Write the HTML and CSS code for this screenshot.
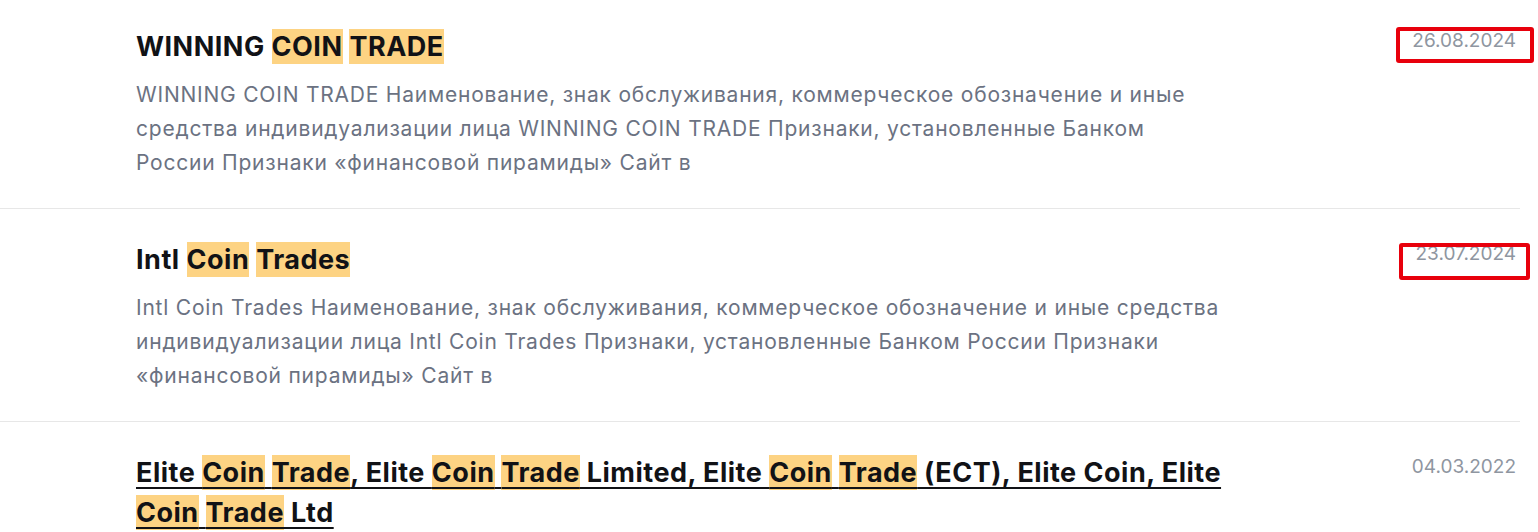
FILE: index.html
```html
<!DOCTYPE html>
<html lang="ru">
<head>
<meta charset="utf-8">
<title>Результаты поиска</title>
<link rel="stylesheet" href="styles.css">
</head>
<body>
<div class="results">
  <div class="row">
    <div class="content">
      <a class="title">WINNING <mark>COIN</mark> <mark>TRADE</mark></a>
      <p class="snippet">WINNING COIN TRADE Наименование, знак обслуживания, коммерческое обозначение и иные средства индивидуализации лица WINNING COIN TRADE Признаки, установленные Банком России Признаки «финансовой пирамиды» Сайт в</p>
    </div>
    <div class="date"><span class="frame frame-a"></span>26.08.2024</div>
  </div>
  <div class="row">
    <div class="content">
      <a class="title">Intl <mark>Coin</mark> <mark>Trades</mark></a>
      <p class="snippet">Intl Coin Trades Наименование, знак обслуживания, коммерческое обозначение и иные средства индивидуализации лица Intl Coin Trades Признаки, установленные Банком России Признаки «финансовой пирамиды» Сайт в</p>
    </div>
    <div class="date"><span class="frame frame-b"></span>23.07.2024</div>
  </div>
  <div class="row">
    <div class="content">
      <a class="title title-hover">Elite <mark>Coin</mark> <mark>Trade</mark>, Elite <mark>Coin</mark> <mark>Trade</mark> Limited, Elite <mark>Coin</mark> <mark>Trade</mark> (ECT), Elite Coin, Elite <mark>Coin</mark> <mark>Trade</mark> Ltd</a>
    </div>
    <div class="date">04.03.2022</div>
  </div>
</div>
</body>
</html>
```

FILE: styles.css
```css
html, body {
  margin: 0;
  padding: 0;
  background: #ffffff;
}

body {
  font-family: Inter, "Noto Sans", "Liberation Sans", sans-serif;
  overflow: hidden;
}

.results {
  width: 1520px;
  margin-top: -4px;
}

.row {
  display: flex;
  justify-content: space-between;
  align-items: flex-start;
  padding: 31px 4px 28px 136px;
  border-bottom: 1px solid #e7e7e7;
}

.content {
  width: 1090px;
}

.title {
  display: block;
  font-size: 27px;
  line-height: 40px;
  font-weight: 700;
  letter-spacing: 0.5px;
  color: #111216;
  text-decoration: none;
}

.title-hover {
  text-decoration: underline;
  text-decoration-thickness: 2px;
  text-underline-offset: 5px;
}

.title mark {
  background: #fdd383;
  color: inherit;
  padding: 1px 0;
}

.snippet {
  margin: 11px 0 0;
  font-size: 21px;
  line-height: 34px;
  letter-spacing: 0.78px;
  color: #6b7282;
}

.date {
  position: relative;
  margin-top: 2px;
  font-size: 19px;
  line-height: 24px;
  color: #8f96a1;
  white-space: nowrap;
}

.frame {
  position: absolute;
  border: 4px solid #e8000c;
  border-radius: 3px;
}

.frame-a {
  left: -16px;
  right: -18px;
  top: -2px;
  bottom: -10px;
}

.frame-b {
  left: -17px;
  right: -14px;
  top: 1px;
  bottom: -14px;
}
```
